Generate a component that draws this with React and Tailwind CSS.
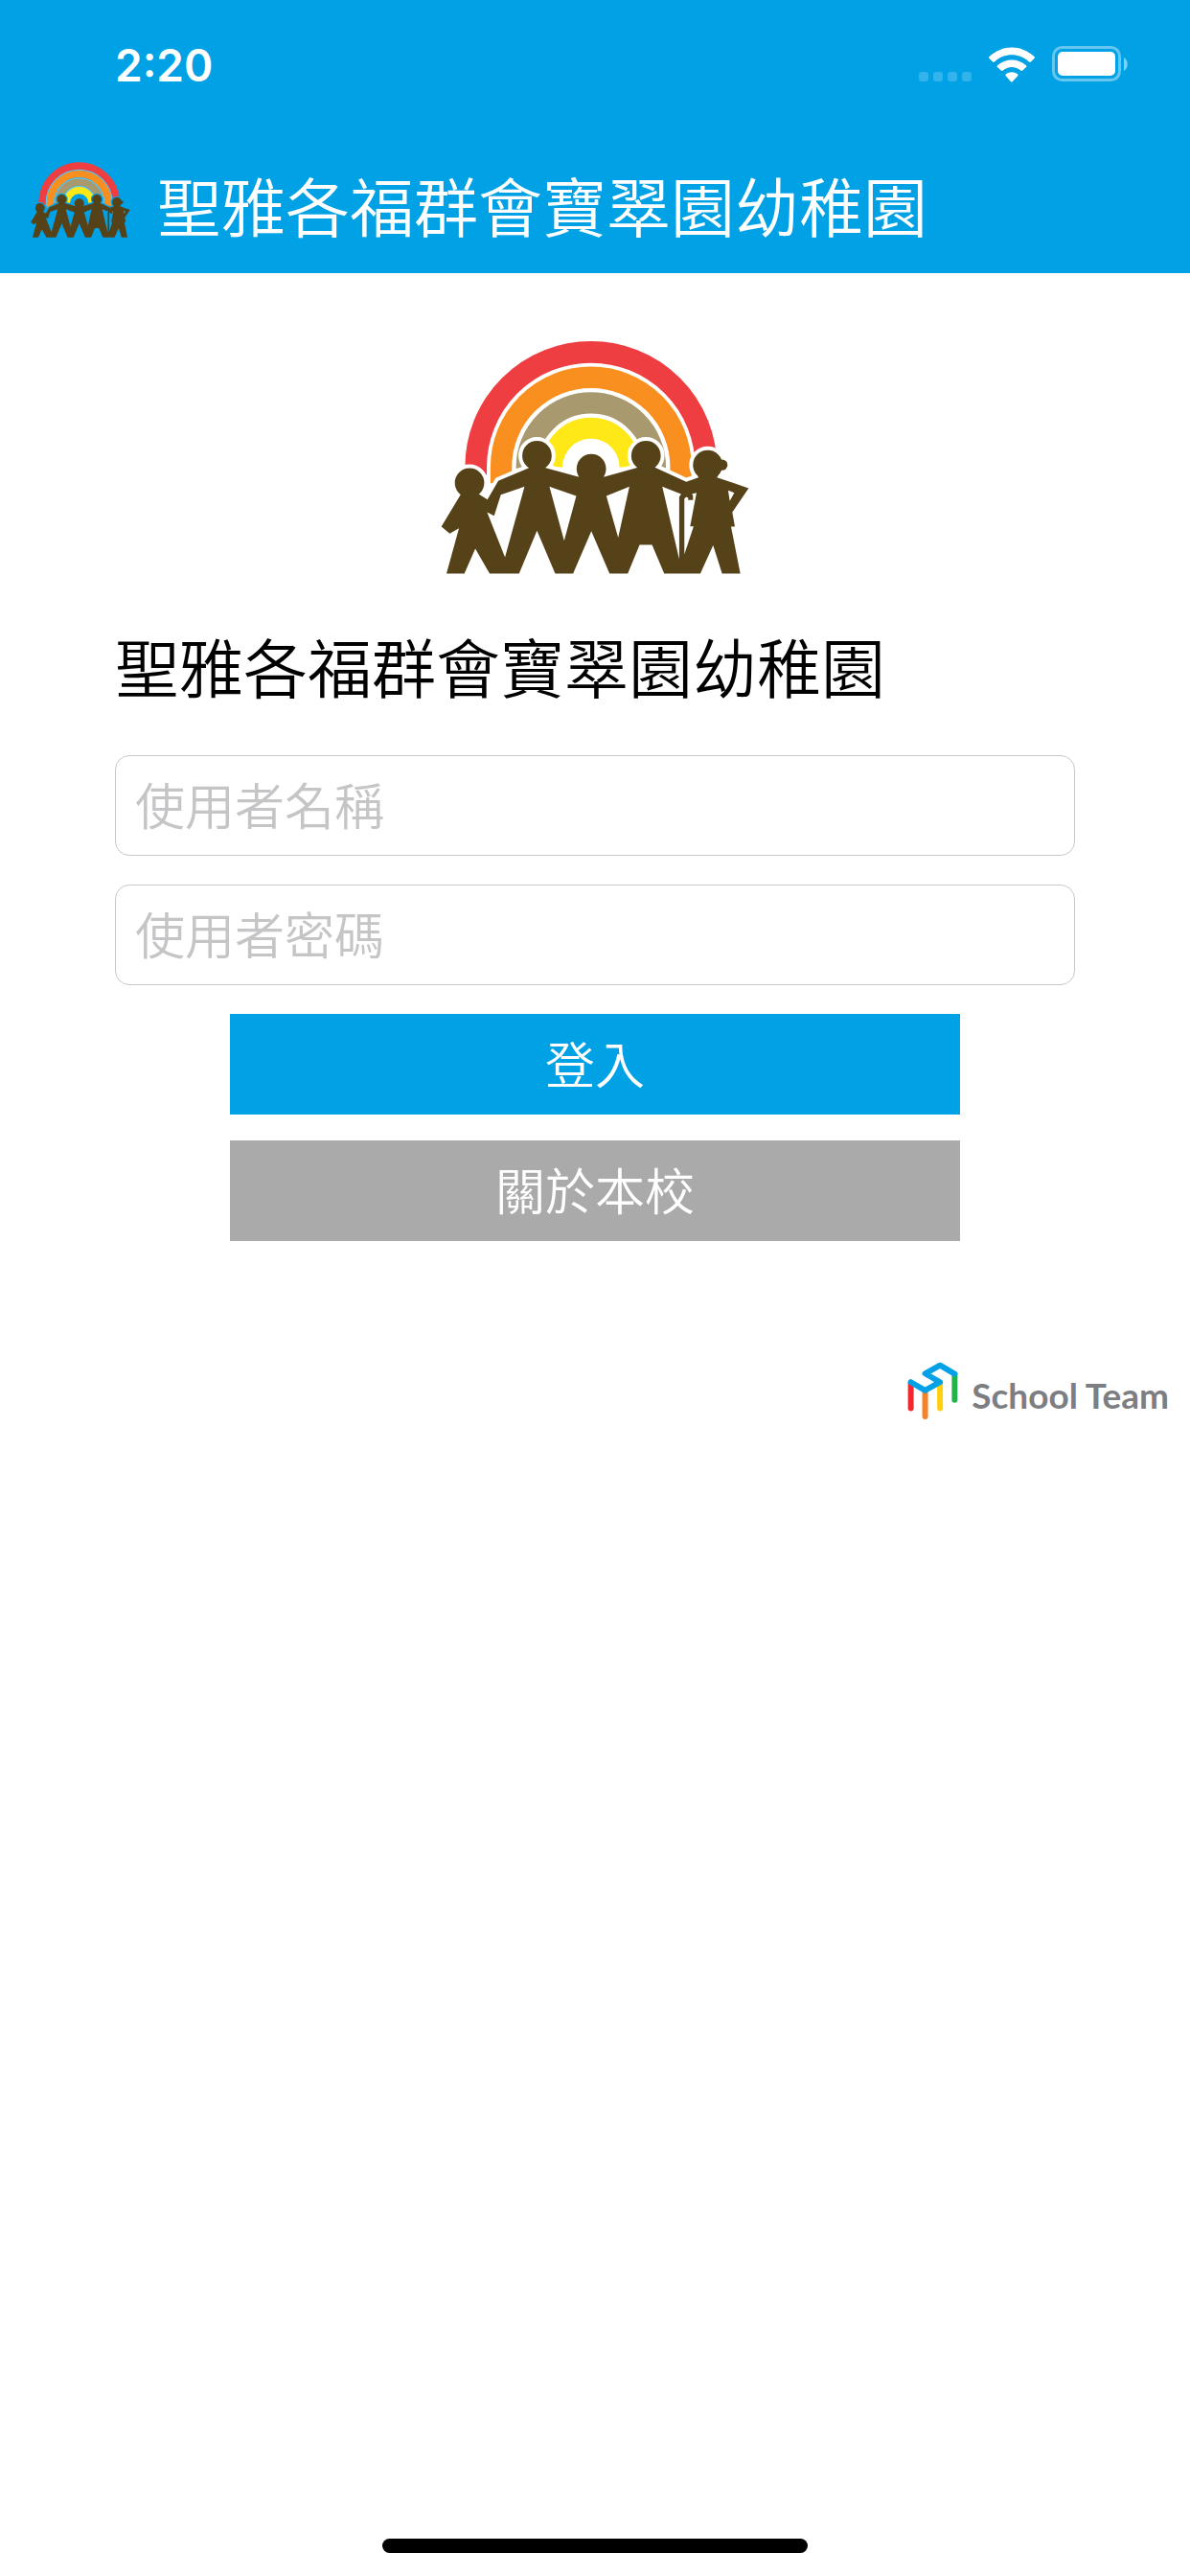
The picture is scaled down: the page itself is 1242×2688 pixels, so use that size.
import { useId } from "react";

const SCHOOL_NAME = "聖雅各福群會寶翠園幼稚園";

const FIGURES =
  "M122 528L62 628L88 650L117 633L78 775H134L168 697L213 775H305L361 641L418 775H474L531 642L588 775H645L682 685H721L759 775H872L912 686L940 775H997L968 628H980L972 583L1023 508L924 474L936 453H860L866 474L828 488L733 444L702 420L672 444L572 472L531 460L490 472L388 444L361 420L336 444L240 485L206 543L182 528L150 500Z" +
  "M248 528L322 503L261 724L205 583L227 594Z" +
  "M400 503L484 532L446 672Z" +
  "M578 532L650 503L615 662Z" +
  "M753 503L812 526L806 535V730Z" +
  "M822 715V540L828 535L834 538V545H849V530L845 526L860 522L840 627H851Z" +
  "M959 515L978 522L964 548Z";

function Figures(props) {
  return (
    <g {...props}>
      <path d={FIGURES} fillRule="evenodd" />
      <circle cx="150" cy="491" r="46" />
      <circle cx="361" cy="406" r="46" />
      <circle cx="531" cy="447" r="46" />
      <circle cx="702" cy="406" r="46" />
      <circle cx="895" cy="435" r="46" />
      <circle cx="940" cy="435" r="17" />
    </g>
  );
}

function arch(r, bottom) {
  return `M${530 - r} ${bottom}V442A${r} ${r} 0 0 1 ${530 + r} 442V${bottom}`;
}

function SchoolLogo({ className, haloOpacity = 1 }) {
  const maskId = useId();
  return (
    <svg viewBox="60 45 965 735" className={className} role="img" aria-label="校徽">
      <mask id={maskId} maskUnits="userSpaceOnUse" x="60" y="45" width="965" height="735">
        <rect x="60" y="45" width="965" height="735" fill="white" />
        <Figures fill="black" stroke="black" strokeWidth="24" />
      </mask>
      <g fill="none" mask={`url(#${maskId})`}>
        <g stroke="white" strokeWidth="14" strokeOpacity={haloOpacity}>
          <path d={arch(320, 470)} />
          <path d={arch(240, 445)} />
          <path d={arch(160, 440)} />
        </g>
        <path d={arch(360, 466)} stroke="#ef3e42" strokeWidth="68" />
        <path d={arch(281, 492)} stroke="#f98f1e" strokeWidth="67" />
        <path d={arch(201, 446)} stroke="#a8996e" strokeWidth="67" />
        <path d={arch(122, 442)} stroke="#ffe817" strokeWidth="66" />
      </g>
      <Figures fill="#564219" />
    </svg>
  );
}

function StatusBar() {
  return (
    <div className="flex h-33 items-end justify-between pr-16 pb-11 pl-30 text-white">
      <time className="font-[Inter,sans-serif] text-[46px] leading-10 font-semibold">2:20</time>
      <div className="flex items-end gap-[18px] pb-0.5">
        <div className="flex gap-[5px] pb-px" aria-hidden="true">
          <span className="size-2.5 rounded-[3px] bg-white/20" />
          <span className="size-2.5 rounded-[3px] bg-white/20" />
          <span className="size-2.5 rounded-[3px] bg-white/20" />
          <span className="size-2.5 rounded-[3px] bg-white/20" />
        </div>
        <svg viewBox="395 86 143 110" className="h-[37px] w-12" fill="white" role="img" aria-label="Wi-Fi">
          <path d="M396 121Q394 118 397 116C437 78 496 78 536 116Q539 118 537 121L526 132Q523 134 520 132C489 103 443 103 413 132Q410 134 407 132Z" />
          <path d="M421 148Q419 145 422 143C448 120 485 120 511 143Q514 145 512 148L500 159Q497 161 494 159C478 145 455 145 439 159Q436 161 433 159Z" />
          <path d="M448 176Q445 173 448 171C459 162 474 162 485 171Q488 173 485 176L469 193Q466 196 463 193Z" />
        </svg>
        <svg viewBox="0 0 80 38" className="h-[38px] w-20" role="img" aria-label="電池">
          <rect x="1.5" y="1.5" width="69" height="34" rx="9" fill="none" stroke="white" strokeOpacity="0.4" strokeWidth="3" />
          <rect x="6" y="6" width="60" height="25" rx="5" fill="white" />
          <path d="M75 12C80 15 80 23 75 26Z" fill="white" fillOpacity="0.5" />
        </svg>
      </div>
    </div>
  );
}

function SchoolTeamMark() {
  return (
    <svg viewBox="74 64 158 184" className="h-[61px] w-[53px]" fill="none" strokeWidth="18" strokeLinecap="round" strokeLinejoin="round" aria-hidden="true">
      <path d="M84 130V210" stroke="#ee2a30" />
      <path d="M129 156V236" stroke="#f98125" />
      <path d="M176 132V210" stroke="#ffd00b" />
      <path d="M222 104V184" stroke="#22b24c" />
      <path d="M84 128L129 154L176 128L129 101L176 75L222 102" stroke="#05a1e6" />
    </svg>
  );
}

const inputClass =
  "h-[105px] w-full rounded-[15px] border border-[#c8c8c8] bg-white px-5 pb-1 text-[52px] font-[350] text-black outline-none placeholder:text-[#c5c5c7]";
const buttonClass = "h-[105px] w-full pb-1 text-[52px] font-[350] text-white";

export default function App() {
  return (
    <div className="flex min-h-screen flex-col bg-white font-['Noto_Sans_CJK_TC',sans-serif]">
      <header className="bg-[#01a1e6]">
        <StatusBar />
        <div className="flex h-[153px] items-center gap-7 px-8">
          <SchoolLogo className="w-26 shrink-0" haloOpacity={0.4} />
          <span className="pt-2 text-[67px] leading-20 font-[350] whitespace-nowrap text-white">{SCHOOL_NAME}</span>
        </div>
      </header>

      <main className="flex flex-col px-30 pt-[70px]">
        <SchoolLogo className="w-[322px] self-center" />
        <h1 className="pt-[54px] text-[67px] leading-20 font-[350] whitespace-nowrap text-black">{SCHOOL_NAME}</h1>
        <form className="flex flex-col gap-[30px] pt-[54px]" onSubmit={(e) => e.preventDefault()}>
          <input className={inputClass} type="text" aria-label="使用者名稱" placeholder="使用者名稱" />
          <input className={inputClass} type="password" aria-label="使用者密碼" placeholder="使用者密碼" />
          <div className="flex flex-col gap-[27px] px-30">
            <button type="submit" className={`${buttonClass} bg-[#01a1e6]`}>登入</button>
            <button type="button" className={`${buttonClass} bg-[#aaaaaa]`}>關於本校</button>
          </div>
        </form>
      </main>

      <div className="flex items-center justify-end gap-3.5 pt-[126px] pr-[22px]">
        <SchoolTeamMark />
        <span className="pt-2 font-[Lato,sans-serif] text-[37px] leading-12 font-bold text-[#7d7e82]">School Team</span>
      </div>

      <footer className="mt-auto flex justify-center pb-6">
        <div className="h-[15px] w-[444px] rounded-full bg-black" />
      </footer>
    </div>
  );
}
